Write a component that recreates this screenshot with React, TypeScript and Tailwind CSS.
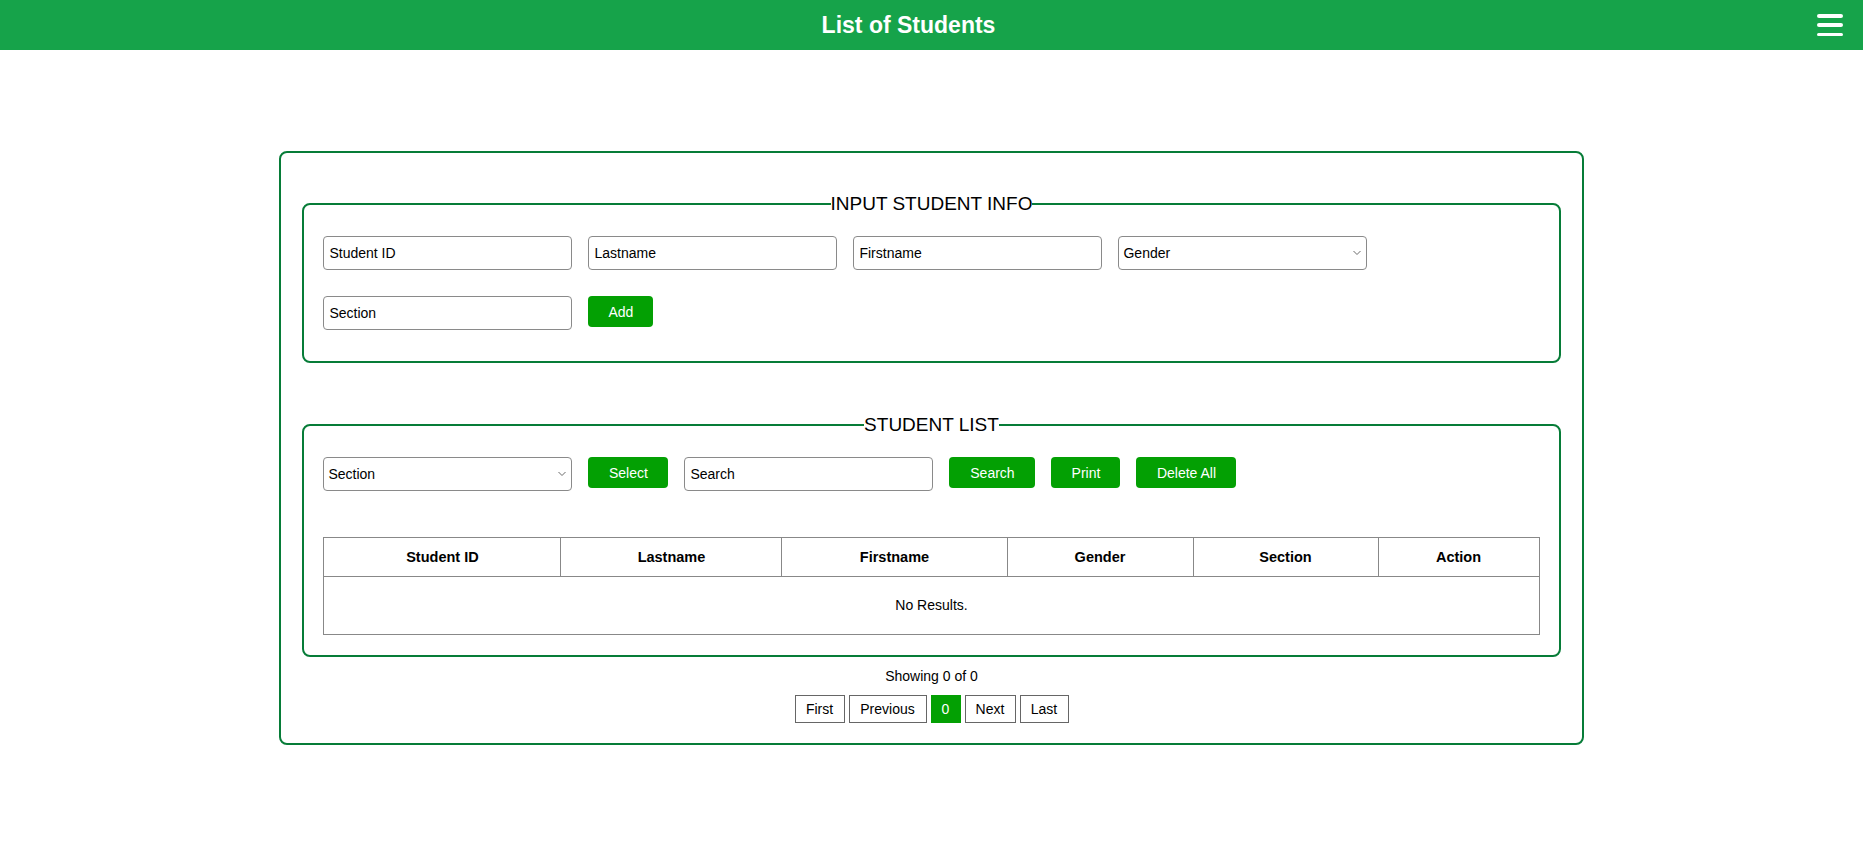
import { useState } from "react";

const inputCls =
    "w-[249px] h-[34px] border border-[#8a8a8a] rounded-[4px] px-[5px] text-[14px] text-black placeholder:text-black bg-white outline-none";
const btnCls =
    "h-[31px] px-5 rounded-[4px] bg-[#03a003] text-white text-[14px] leading-none cursor-pointer";
const pageBtn =
    "h-[28px] px-[10px] border border-[#666] bg-white text-black text-[14px] leading-none cursor-pointer";

const Chevron = () => (
    <svg
        className="pointer-events-none absolute right-[6px] top-1/2 -translate-y-1/2"
        width="8"
        height="5"
        viewBox="0 0 8 5"
        fill="none"
    >
        <path d="M0.5 0.5 L4 4 L7.5 0.5" stroke="#6b6b6b" strokeWidth="1" />
    </svg>
);

const SelectBox = ({ label, options }: { label: string; options: string[] }) => (
    <div className="relative w-[249px]">
        <select
            defaultValue=""
            className="w-full h-[34px] appearance-none border border-[#8a8a8a] rounded-[4px] pl-[4px] pr-5 text-[14px] text-black bg-white outline-none"
        >
            <option value="" disabled>{label}</option>
            {options.map((o) => (
                <option key={o} value={o}>{o}</option>
            ))}
        </select>
        <Chevron />
    </div>
);

const Legend = ({ children }: { children: string }) => (
    <legend className="mx-auto px-0 text-[19px] leading-[21px] text-black">{children}</legend>
);

const columns = [
    { name: "Student ID", w: "w-[237px]" },
    { name: "Lastname", w: "w-[221px]" },
    { name: "Firstname", w: "w-[225px]" },
    { name: "Gender", w: "w-[186px]" },
    { name: "Section", w: "w-[185px]" },
    { name: "Action", w: "w-[161px]" },
];

const App = () => {
    const [students] = useState<string[][]>([]);

    return (
        <div className="min-h-screen bg-white font-['Liberation_Sans',Arial,sans-serif] text-black">
            {/* top bar */}
            <header className="h-[50px] bg-[#16a34a] flex items-center">
                <h1 className="flex-1 text-center text-white font-bold text-[23px]">List of Students</h1>
                <button className="mr-[20px] w-[26px] h-[22px] flex flex-col justify-between cursor-pointer">
                    <span className="block h-[3.5px] w-full rounded-full bg-white"></span>
                    <span className="block h-[3.5px] w-full rounded-full bg-white"></span>
                    <span className="block h-[3.5px] w-full rounded-full bg-white"></span>
                </button>
            </header>

            <main className="w-[70%] mx-auto mt-[101px] border-2 border-[#077c38] rounded-[8px] px-[21px] pt-[40px] pb-[20px]">
                <fieldset className="border-2 border-[#077c38] rounded-[8px] px-[19px] pt-[22px] pb-[31px]">
                    <Legend>INPUT STUDENT INFO</Legend>
                    <div className="flex flex-wrap items-start gap-x-4 gap-y-[26px]">
                        <input className={inputCls} placeholder="Student ID" />
                        <input className={inputCls} placeholder="Lastname" />
                        <input className={inputCls} placeholder="Firstname" />
                        <SelectBox label="Gender" options={["Male", "Female"]} />
                        <input className={inputCls} placeholder="Section" />
                        <button className={btnCls}>Add</button>
                    </div>
                </fieldset>

                <fieldset className="mt-[51px] border-2 border-[#077c38] rounded-[8px] px-[19px] pt-[22px] pb-[20px]">
                    <Legend>STUDENT LIST</Legend>
                    <div className="flex items-start gap-4">
                        <SelectBox label="Section" options={[]} />
                        <button className={`${btnCls} w-[80px] px-0`}>Select</button>
                        <input className={inputCls} placeholder="Search" />
                        <button className={`${btnCls} w-[86px] px-0`}>Search</button>
                        <button className={`${btnCls} w-[69px] px-0`}>Print</button>
                        <button className={`${btnCls} w-[100px] px-0`}>Delete All</button>
                    </div>

                    <table className="w-full mt-[46px] border-collapse border border-[#888]">
                        <thead>
                            <tr>
                                {columns.map((c) => (
                                    <th
                                        key={c.name}
                                        className={`${c.w} border border-[#888] py-[10px] text-[14.5px] leading-[18px] font-bold text-center`}
                                    >
                                        {c.name}
                                    </th>
                                ))}
                            </tr>
                        </thead>
                        <tbody>
                            {students.length === 0 && (
                                <tr>
                                    <td colSpan={6} className="border border-[#888] py-[20px] text-[14px] leading-[17px] text-center">
                                        No Results.
                                    </td>
                                </tr>
                            )}
                        </tbody>
                    </table>
                </fieldset>

                <div className="mt-[11px] flex flex-col items-center">
                    <p className="text-[14px] leading-[16px]">Showing 0 of 0</p>
                    <div className="mt-[11px] flex gap-[4px]">
                        <button className={`${pageBtn} w-[50px] px-0`}>First</button>
                        <button className={`${pageBtn} w-[78px] px-0`}>Previous</button>
                        <button className="h-[28px] w-[30px] border border-[#03a003] bg-[#03a003] text-white text-[14px] leading-none">0</button>
                        <button className={`${pageBtn} w-[51px] px-0`}>Next</button>
                        <button className={`${pageBtn} w-[49px] px-0`}>Last</button>
                    </div>
                </div>
            </main>
        </div>
    );
};

export default App;
